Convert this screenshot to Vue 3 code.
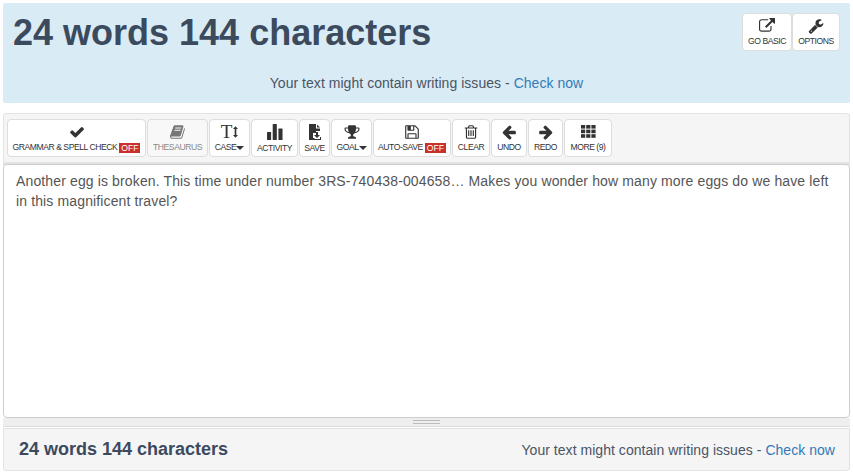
<template>
  <div class="page">
    <header class="top">
      <div class="top-row">
        <h1 class="big-count">{{ counts }}</h1>
        <div class="top-btns">
          <button v-for="b in topButtons" :key="b.label" class="tool top-btn" :style="{ width: b.w + 'px' }">
            <svg class="ico" viewBox="0 0 1792 1792"><path :d="b.d" /></svg>
            <span class="lbl">{{ b.label }}</span>
          </button>
        </div>
      </div>
      <p class="hint">Your text might contain writing issues - <a class="link">Check now</a></p>
    </header>

    <div class="toolbar">
      <button
        v-for="b in tools"
        :key="b.label"
        class="tool"
        :class="{ disabled: b.disabled }"
        :style="{ width: b.w + 'px' }"
      >
        <span v-if="b.kind === 'case'" class="case-ico">
          <span class="case-t">T</span>
          <svg class="case-arrow" viewBox="0 0 6 14"><path d="M3 0 6 3.4H4V10.600H6L3 14 0 10.600H2V3.400H0z" /></svg>
        </span>
        <svg v-else-if="b.kind === 'grid'" class="ico grid" viewBox="0 0 15 13">
          <rect v-for="c in gridCells" :key="c.x + '-' + c.y" :x="c.x" :y="c.y" width="4.200" height="3.600" />
        </svg>
        <svg v-else-if="b.kind === 'bars'" class="ico" viewBox="0 0 14 14">
          <rect x="0" y="7" width="3.600" height="7" rx=".5" />
          <rect x="5" y="0" width="3.600" height="14" rx=".5" />
          <rect x="10" y="4" width="3.600" height="10" rx=".5" />
        </svg>
        <svg v-else-if="b.kind === 'save'" class="ico save-ico" viewBox="0 0 12 16">
          <path d="M0 0H7V4.500H11V7H7V9H4V14H5.500V16H0z" />
          <path d="M8 0.500 11 3.500H8z" />
          <path d="M7 8H9V11H11L8 14 5 11H7z" />
          <path d="M5 13V15H11V13H12V16H5z" />
        </svg>
        <svg v-else class="ico" :class="{ gray: b.disabled }" viewBox="0 0 1792 1792"><path :d="b.d" /></svg>
        <span class="lbl" :class="{ tall: b.tall }">
          {{ b.label }}<i v-if="b.caret" class="caret"></i><em v-if="b.off" class="off">OFF</em>
        </span>
      </button>
    </div>

    <div class="editor">
      Another egg is broken. This time under number 3RS-740438-004658… Makes you wonder how many more eggs do we have left in this magnificent travel?
    </div>

    <div class="resizer"><span class="grip"></span></div>

    <footer class="bottom">
      <strong class="small-count">{{ counts }}</strong>
      <p class="hint-small">Your text might contain writing issues - <a class="link">Check now</a></p>
    </footer>
  </div>
</template>

<script setup>
const counts = '24 words 144 characters'

const icons = {
  check: 'M1671 566q0 40-28 68l-724 724-136 136q-28 28-68 28t-68-28l-136-136-362-362q-28-28-28-68t28-68l136-136q28-28 68-28t68 28l294 295 656-657q28-28 68-28t68 28l136 136q28 28 28 68z',
  book: 'M1639 478q40 57 18 129l-275 906q-19 64-76.5 107.5t-122.5 43.5h-923q-77 0-148.5-53.5t-99.5-131.5q-24-67-2-127 0-4 3-27t4-37q1-8-3-21.5t-3-19.5q2-11 8-21t16.5-23.5 16.5-23.5q23-38 45-91.5t30-91.5q3-10 .5-30t-.5-28q3-11 17-28t17-23q21-36 42-92t25-90q1-9-2.5-32t.5-28q4-13 22-30.5t22-22.5q19-26 42.5-84.5t27.5-96.5q1-8-3-25.5t-2-26.5q2-8 9-18t18-23 17-21q8-12 16.5-30.5t15-35 16-36 19.5-32 26.5-23.5 36-11.5 47.5 5.5l-1 3q38-9 51-9h761q74 0 114 56t18 130l-274 906q-36 119-71.5 153.5t-128.5 34.5h-869q-27 0-38 15-11 16-1 43 24 70 144 70h923q29 0 56-15.5t35-41.5l300-987q7-22 5-57 38 15 59 43zm-1064 2q-4 13 2 22.5t20 9.5h608q13 0 25.5-9.5t16.5-22.5l21-64q4-13-2-22.5t-20-9.5h-608q-13 0-25.5 9.5t-16.5 22.5zm-83 256q-4 13 2 22.5t20 9.5h608q13 0 25.5-9.5t16.5-22.5l21-64q4-13-2-22.5t-20-9.5h-608q-13 0-25.5 9.5t-16.5 22.5z',
  trophy: 'M522 883q-74-162-74-371h-256v96q0 78 94.500 162t235.500 113zm1078-275v-96h-256q0 209-74 371 141-29 235.500-113t94.500-162zm128-128v128q0 71-41.500 143t-112 130-173 97.500-215.500 44.500q-42 54-95 95-38 34-52.500 72.500t-14.500 89.500q0 54 30.500 91t97.500 37q75 0 133.500 45.500t58.500 114.500v64q0 14-9 23t-23 9h-832q-14 0-23-9t-9-23v-64q0-69 58.500-114.500t133.500-45.500q67 0 97.500-37t30.500-91q0-51-14.500-89.500t-52.500-72.500q-53-41-95-95-113-5-215.500-44.500t-173-97.500-112-130-41.500-143v-128q0-40 28-68t68-28h288v-96q0-66 47-113t113-47h576q66 0 113 47t47 113v96h288q40 0 68 28t28 68z',
  floppy: 'M512 1536h768v-384h-768v384zm896 0h128v-896q0-14-10-38.500t-20-34.500l-281-281q-10-10-34-20t-39-10v416q0 40-28 68t-68 28h-576q-40 0-68-28t-28-68v-416h-128v1280h128v-416q0-40 28-68t68-28h832q40 0 68 28t28 68v416zm-384-928v-320q0-13-9.500-22.500t-22.500-9.500h-192q-13 0-22.500 9.500t-9.500 22.500v320q0 13 9.500 22.500t22.500 9.500h192q13 0 22.500-9.500t9.500-22.500zm640 32v928q0 40-28 68t-68 28h-1344q-40 0-68-28t-28-68v-1344q0-40 28-68t68-28h928q40 0 88 20t76 48l280 280q28 28 48 76t20 88z',
  trash: 'M704 736v576q0 14-9 23t-23 9h-64q-14 0-23-9t-9-23v-576q0-14 9-23t23-9h64q14 0 23 9t9 23zm256 0v576q0 14-9 23t-23 9h-64q-14 0-23-9t-9-23v-576q0-14 9-23t23-9h64q14 0 23 9t9 23zm256 0v576q0 14-9 23t-23 9h-64q-14 0-23-9t-9-23v-576q0-14 9-23t23-9h64q14 0 23 9t9 23zm128 724v-948h-896v948q0 22 7 40.500t14.500 27 10.500 8.500h832q3 0 10.500-8.500t14.500-27 7-40.500zm-672-1076h448l-48-117q-7-9-17-11h-317q-10 2-17 11zm928 32v64q0 14-9 23t-23 9h-96v948q0 83-47 143.500t-113 60.500h-832q-66 0-113-58.500t-47-141.500v-952h-96q-14 0-23-9t-9-23v-64q0-14 9-23t23-9h309l70-167q15-37 54-63t79-26h320q40 0 79 26t54 63l70 167h309q14 0 23 9t9 23z',
  left: 'M1664 896v128q0 53-32.500 90.500t-84.500 37.500h-704l293 294q38 36 38 90t-38 90l-75 76q-37 37-90 37-52 0-91-37l-651-652q-37-37-37-90 0-52 37-91l651-650q38-38 91-38 52 0 90 38l75 74q38 38 38 91t-38 91l-293 293h704q52 0 84.500 37.500t32.500 90.500z',
  right: 'M1600 960q0 54-37 91l-651 651q-39 37-91 37-51 0-90-37l-75-75q-38-38-38-91t38-91l293-293h-704q-52 0-84.500-37.500t-32.500-90.500v-128q0-53 32.500-90.500t84.500-37.500h704l-293-294q-38-36-38-90t38-90l75-75q38-38 90-38 53 0 91 38l651 651q37 35 37 90z',
  external: 'M1408 928v320q0 119-84.500 203.500t-203.500 84.500h-832q-119 0-203.500-84.500t-84.500-203.500v-832q0-119 84.500-203.500t203.500-84.500h704q14 0 23 9t9 23v64q0 14-9 23t-23 9h-704q-66 0-113 47t-47 113v832q0 66 47 113t113 47h832q66 0 113-47t47-113v-320q0-14 9-23t23-9h64q14 0 23 9t9 23zm384-864v512q0 26-19 45t-45 19-45-19l-176-176-652 652q-10 10-23 10t-23-10l-114-114q-10-10-10-23t10-23l652-652-176-176q-19-19-19-45t19-45 45-19h512q26 0 45 19t19 45z',
  wrench: 'M448 1472q0-26-19-45t-45-19-45 19-19 45 19 45 45 19 45-19 19-45zm644-420l-682 682q-37 37-90 37-52 0-91-37l-106-108q-38-36-38-90 0-53 38-91l681-681q39 98 114.500 173.500t173.500 114.500zm634-435q0 39-23 106-47 134-164.500 217.500t-258.500 83.500q-185 0-316.500-131.500t-131.500-316.500 131.500-316.500 316.500-131.500q58 0 121.500 16.500t107.500 46.500q16 11 16 28t-16 28l-293 169v224l193 107q5-3 79-48.500t135.500-81 70.500-35.500q15 0 23.500 10t8.500 25z',
}

const topButtons = [
  { label: 'GO BASIC', w: 50, d: icons.external },
  { label: 'OPTIONS', w: 48, d: icons.wrench },
]

const tools = [
  { label: 'GRAMMAR & SPELL CHECK', w: 139, d: icons.check, off: true },
  { label: 'THESAURUS', w: 61, d: icons.book, disabled: true },
  { label: 'CASE', w: 41, kind: 'case', caret: true },
  { label: 'ACTIVITY', w: 47, kind: 'bars', tall: true },
  { label: 'SAVE', w: 31, kind: 'save', tall: true },
  { label: 'GOAL', w: 41, d: icons.trophy, caret: true },
  { label: 'AUTO-SAVE', w: 78, d: icons.floppy, off: true },
  { label: 'CLEAR', w: 38, d: icons.trash },
  { label: 'UNDO', w: 36, d: icons.left },
  { label: 'REDO', w: 35, d: icons.right },
  { label: 'MORE (9)', w: 48, kind: 'grid' },
]

const gridCells = []
for (let y = 0; y < 3; y++) {
  for (let x = 0; x < 3; x++) {
    gridCells.push({ x: x * 5.2, y: y * 4.6 })
  }
}
</script>

<style>
html, body {
  margin: 0;
  background: #fff;
}
</style>

<style scoped>
.page {
  box-sizing: border-box;
  width: 853px;
  height: 475px;
  padding: 3px 3px 0;
  font-family: "Liberation Sans", Arial, sans-serif;
  color: #444;
  overflow: hidden;
}

.top {
  box-sizing: border-box;
  height: 100px;
  margin-bottom: 10px;
  padding: 10px 10px 0 10px;
  background: #d9ebf5;
  border-radius: 2px;
}

.top-row {
  display: flex;
  justify-content: space-between;
  height: 50px;
}

.big-count {
  margin: 0;
  font-size: 36px;
  line-height: 40px;
  font-weight: 700;
  color: #3c4a5e;
}

.top-btns {
  display: flex;
}

.top-btn {
  height: 38px;
  border-color: #ccc;
}

.hint {
  margin: 0;
  padding-top: 10px;
  text-align: center;
  font-size: 14px;
  line-height: 20px;
  letter-spacing: .04px;
  color: #4a5464;
}

.link {
  color: #337ab7;
}

.toolbar {
  box-sizing: border-box;
  height: 52px;
  display: flex;
  gap: 1px;
  padding: 5px 3px;
  background: #f5f5f5;
  border: 1px solid #e3e3e3;
  border-bottom: 3px solid #e3e3e3;
  border-radius: 3px 3px 0 0;
}

.tool {
  box-sizing: border-box;
  height: 38px;
  flex: none;
  padding: 4px 0 0;
  display: flex;
  flex-direction: column;
  align-items: center;
  font-family: inherit;
  background: #fff;
  border: 1px solid #ddd;
  border-radius: 4px;
  color: #333;
}

.tool.disabled {
  background: #f8f8f8;
  color: #888;
}

.ico {
  width: 16px;
  height: 16px;
  flex: none;
  fill: #333;
}

.ico.gray {
  fill: #777;
}

.ico.grid {
  width: 15px;
  height: 13px;
  margin-top: 1px;
  margin-bottom: 2px;
}

.save-ico {
  width: 12px;
}

.lbl {
  display: flex;
  align-items: center;
  height: 11px;
  margin-top: 2px;
  font-size: 8.6px;
  line-height: 11px;
  letter-spacing: -.46px;
  white-space: nowrap;
}

.lbl.tall {
  margin-top: 3px;
}

.caret {
  width: 0;
  height: 0;
  margin-left: 0;
  border-left: 4px solid transparent;
  border-right: 4px solid transparent;
  border-top: 4px solid #333;
}

.off {
  margin-left: 2px;
  padding: 0 2px;
  font-style: normal;
  font-size: 8.6px;
  line-height: 10px;
  letter-spacing: 0;
  color: #fff;
  background: #c9302c;
}

.case-ico {
  display: flex;
  align-items: center;
  height: 16px;
  gap: 1px;
}

.case-t {
  font-family: "Liberation Serif", serif;
  font-size: 19px;
  line-height: 16px;
  color: #333;
}

.case-arrow {
  width: 5px;
  height: 14px;
  fill: #333;
}

.editor {
  box-sizing: border-box;
  height: 254px;
  margin-top: -1px;
  padding: 6px 15px 6px 12px;
  font-size: 14px;
  line-height: 20px;
  letter-spacing: .13px;
  color: #555;
  background: #fff;
  border: 1px solid #ccc;
  border-radius: 4px;
}

.resizer {
  height: 9px;
  display: flex;
  justify-content: center;
  background: #eee;
  border-bottom: 1px solid #ddd;
  box-sizing: border-box;
}

.grip {
  width: 27px;
  height: 4px;
  margin-top: 2px;
  border-top: 1px solid #bbb;
  border-bottom: 1px solid #bbb;
  box-sizing: border-box;
}

.bottom {
  box-sizing: border-box;
  height: 43px;
  margin-top: 1px;
  padding: 0 14px 0 15px;
  display: flex;
  justify-content: space-between;
  align-items: center;
  background: #f5f5f5;
  border: 1px solid #e3e3e3;
  border-radius: 0 0 3px 3px;
}

.small-count {
  font-size: 18px;
  color: #3c4a5e;
}

.hint-small {
  margin: 0;
  font-size: 14px;
  letter-spacing: .04px;
  color: #4a5464;
}
</style>
